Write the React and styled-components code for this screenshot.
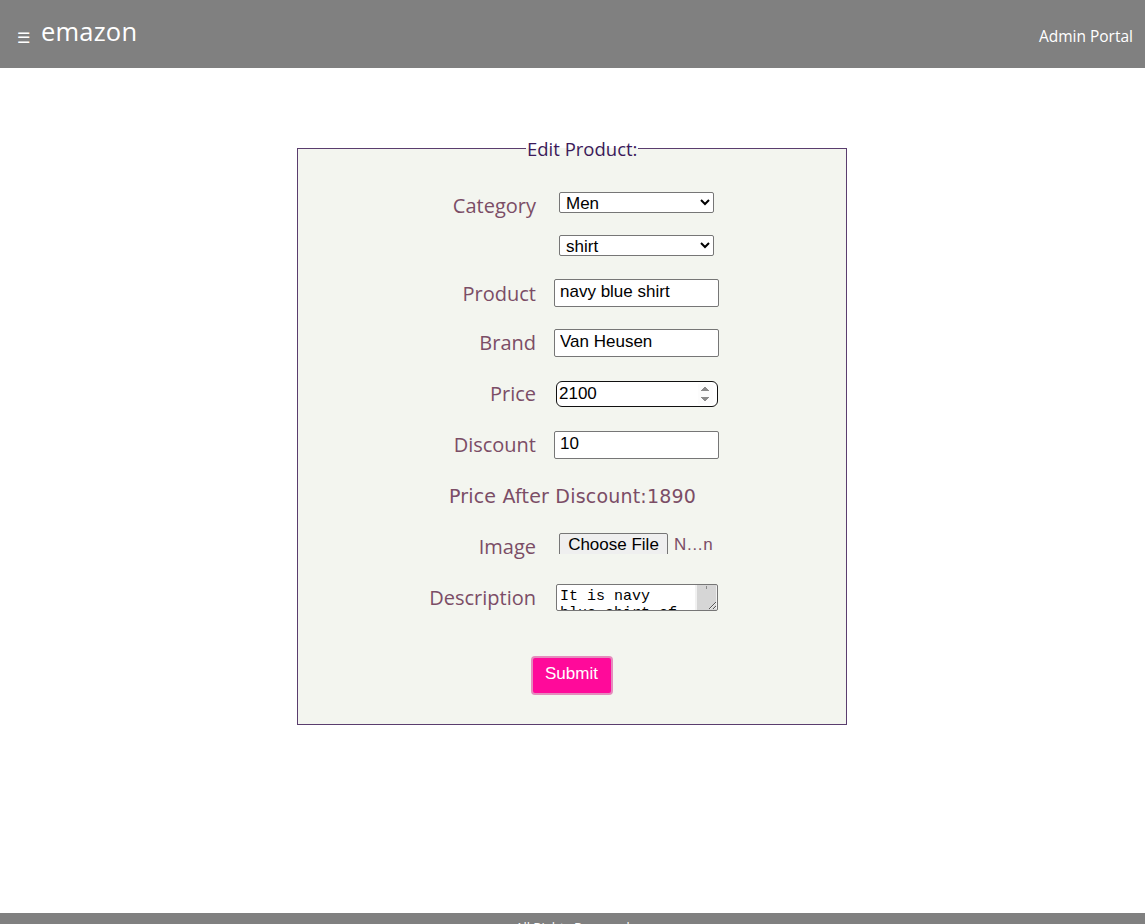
import React from "react";
import styled, { createGlobalStyle } from "styled-components";

const Global = createGlobalStyle`
  html, body { margin: 0; padding: 0; background: #fff; }
  body { font-family: "Open Sans", "Noto Sans", sans-serif; }
  input[type=number]::-webkit-inner-spin-button { opacity: 1; }
`;

const Header = styled.header`
  height: 68px;
  background: #808080;
  display: flex;
  align-items: center;
  justify-content: space-between;
  padding: 0 12px 0 17px;
  color: #fff;
`;

const Brand = styled.div`
  display: flex;
  align-items: center;
  gap: 11px;
`;

const Burger = styled.span`
  font-size: 15px;
  line-height: 1;
  margin-top: 6px;
`;

const Logo = styled.span`
  font-size: 25.5px;
  letter-spacing: 0.2px;
  margin-top: -6px;
`;

const Portal = styled.span`
  font-size: 15.5px;
  margin-top: 4px;
`;

const Main = styled.main`
  min-height: 845px;
  box-sizing: border-box;
  padding-top: 68px;
  display: flex;
  justify-content: center;
  align-items: flex-start;
`;

const Fieldset = styled.fieldset`
  width: 550px;
  box-sizing: border-box;
  margin: 0 0 0 -1px;
  padding: 0 0 29px;
  border: 1px solid #5a3d6e;
  background: #f3f5ef;
  min-width: 0;
`;

const Legend = styled.legend`
  margin-left: 228px;
  padding: 0 1px;
  font-size: 18.5px;
  line-height: 25px;
  color: #3b1a5a;
`;

const Grid = styled.div`
  display: grid;
  grid-template-columns: 238px 1fr;
  column-gap: 18px;
  margin-top: 22px;
`;

const Row = styled.div`
  display: contents;
`;

const Cell = styled.div`
  height: ${(p) => p.$h}px;
  display: flex;
  align-items: center;
  justify-content: ${(p) => (p.$right ? "flex-end" : "flex-start")};
`;

const Label = styled.label`
  font-size: 20px;
  color: #7b4d66;
  margin-top: ${(p) => p.$dy || 0}px;
`;

const Select = styled.select`
  width: 155px;
  height: 21px;
  margin-left: 5px;
  margin-top: ${(p) => p.$dy || 0}px;
  box-sizing: border-box;
  font-family: "Liberation Sans", Arial, sans-serif;
  font-size: 17px;
  padding: 0 2px;
  border: 1px solid #767676;
  border-radius: 2px;
  background: #fff;
  color: #000;
`;

const TextInput = styled.input`
  width: 165px;
  height: 28px;
  box-sizing: border-box;
  font-family: "Liberation Sans", Arial, sans-serif;
  font-size: 17px;
  padding: 1px 5px 3px;
  border: 1px solid #767676;
  border-radius: 2px;
  background: #fff;
  color: #000;
  outline: none;
`;

const NumberInput = styled(TextInput)`
  width: 162px;
  height: 26px;
  margin-left: 2px;
  padding: 0 4px 0 2px;
  border: 1.5px solid #101010;
  border-radius: 6px;
`;

const PriceAfter = styled.div`
  grid-column: 1 / span 2;
  height: 51px;
  display: flex;
  align-items: center;
  justify-content: center;
  font-family: "Comic Sans MS", "DejaVu Sans", sans-serif;
  font-size: 19px;
  letter-spacing: 0.2px;
  color: #7b4d66;
  padding-left: 1px;
`;

const FileBox = styled.div`
  display: flex;
  align-items: flex-start;
  height: 21px;
  overflow: hidden;
  margin-left: 5px;
  margin-top: -6px;
  gap: 6px;
`;

const FileButton = styled.button`
  width: 109px;
  height: 26px;
  box-sizing: border-box;
  font-family: "Liberation Sans", Arial, sans-serif;
  font-size: 17px;
  padding: 0 0 2px;
  background: #efefef;
  border: 1px solid #767676;
  border-radius: 2px;
  color: #000;
`;

const FileName = styled.span`
  font-family: "Liberation Sans", Arial, sans-serif;
  font-size: 17px;
  line-height: 23px;
  color: #7b4d66;
`;

const TextArea = styled.textarea`
  width: 162px;
  height: 27px;
  margin-left: 2px;
  box-sizing: border-box;
  font-family: "Liberation Mono", monospace;
  font-size: 15px;
  line-height: 17px;
  padding: 3px 25px 0 3px;
  border: 1px solid #767676;
  border-radius: 2px;
  overflow: hidden;
  resize: both;
  background:
    linear-gradient(to bottom, #8a8a8a, #8a8a8a) no-repeat calc(100% - 10px) 1px / 1px 3px,
    linear-gradient(to right, #fff calc(100% - 22px), #f1f1f1 calc(100% - 22px), #f1f1f1 calc(100% - 20px), #d6d6d6 calc(100% - 20px), #d6d6d6 calc(100% - 1px), #f1f1f1 calc(100% - 1px));
  color: #000;
`;

const SubmitWrap = styled.div`
  grid-column: 1 / span 2;
  display: flex;
  justify-content: center;
  padding-top: 33px;
`;

const Submit = styled.button`
  width: 82px;
  height: 39px;
  box-sizing: border-box;
  margin-left: -1px;
  background: #ff0a9a;
  color: #fff;
  font-family: "Liberation Sans", Arial, sans-serif;
  font-size: 17px;
  border: 2px solid #e58bbd;
  border-radius: 4px;
  padding: 0 0 3px;
`;

const Footer = styled.footer`
  background: #808080;
  color: #fff;
  text-align: center;
  font-size: 13px;
  padding: 5px 0 8px;
`;

export default function App() {
  return (
    <>
      <Global />
      <Header>
        <Brand>
          <Burger>☰</Burger>
          <Logo>emazon</Logo>
        </Brand>
        <Portal>Admin Portal</Portal>
      </Header>
      <Main>
        <Fieldset>
          <Legend>Edit Product:</Legend>
          <Grid>
            <Row>
              <Cell $h={42} $right>
                <Label $dy={3}>Category</Label>
              </Cell>
              <Cell $h={42}>
                <Select $dy={-4} defaultValue="Men">
                  <option>Men</option>
                  <option>Women</option>
                </Select>
              </Cell>
            </Row>
            <Row>
              <Cell $h={44} $right />
              <Cell $h={44}>
                <Select $dy={-4} defaultValue="shirt">
                  <option>shirt</option>
                  <option>t-shirt</option>
                </Select>
              </Cell>
            </Row>
            <Row>
              <Cell $h={48} $right>
                <Label>Product</Label>
              </Cell>
              <Cell $h={48}>
                <TextInput type="text" defaultValue="navy blue shirt" />
              </Cell>
            </Row>
            <Row>
              <Cell $h={51} $right>
                <Label>Brand</Label>
              </Cell>
              <Cell $h={51}>
                <TextInput type="text" defaultValue="Van Heusen" />
              </Cell>
            </Row>
            <Row>
              <Cell $h={51} $right>
                <Label>Price</Label>
              </Cell>
              <Cell $h={51}>
                <NumberInput type="number" defaultValue="2100" />
              </Cell>
            </Row>
            <Row>
              <Cell $h={51} $right>
                <Label>Discount</Label>
              </Cell>
              <Cell $h={51}>
                <TextInput type="text" defaultValue="10" />
              </Cell>
            </Row>
            <PriceAfter>Price After Discount:1890</PriceAfter>
            <Row>
              <Cell $h={50} $right>
                <Label>Image</Label>
              </Cell>
              <Cell $h={50}>
                <FileBox>
                  <FileButton type="button">Choose File</FileButton>
                  <FileName>N…n</FileName>
                </FileBox>
              </Cell>
            </Row>
            <Row>
              <Cell $h={52} $right>
                <Label>Description</Label>
              </Cell>
              <Cell $h={52}>
                <TextArea defaultValue="It is navy blue shirt of Van Heusen brand." />
              </Cell>
            </Row>
            <SubmitWrap>
              <Submit type="button">Submit</Submit>
            </SubmitWrap>
          </Grid>
        </Fieldset>
      </Main>
      <Footer>All Rights Reserved</Footer>
    </>
  );
}
